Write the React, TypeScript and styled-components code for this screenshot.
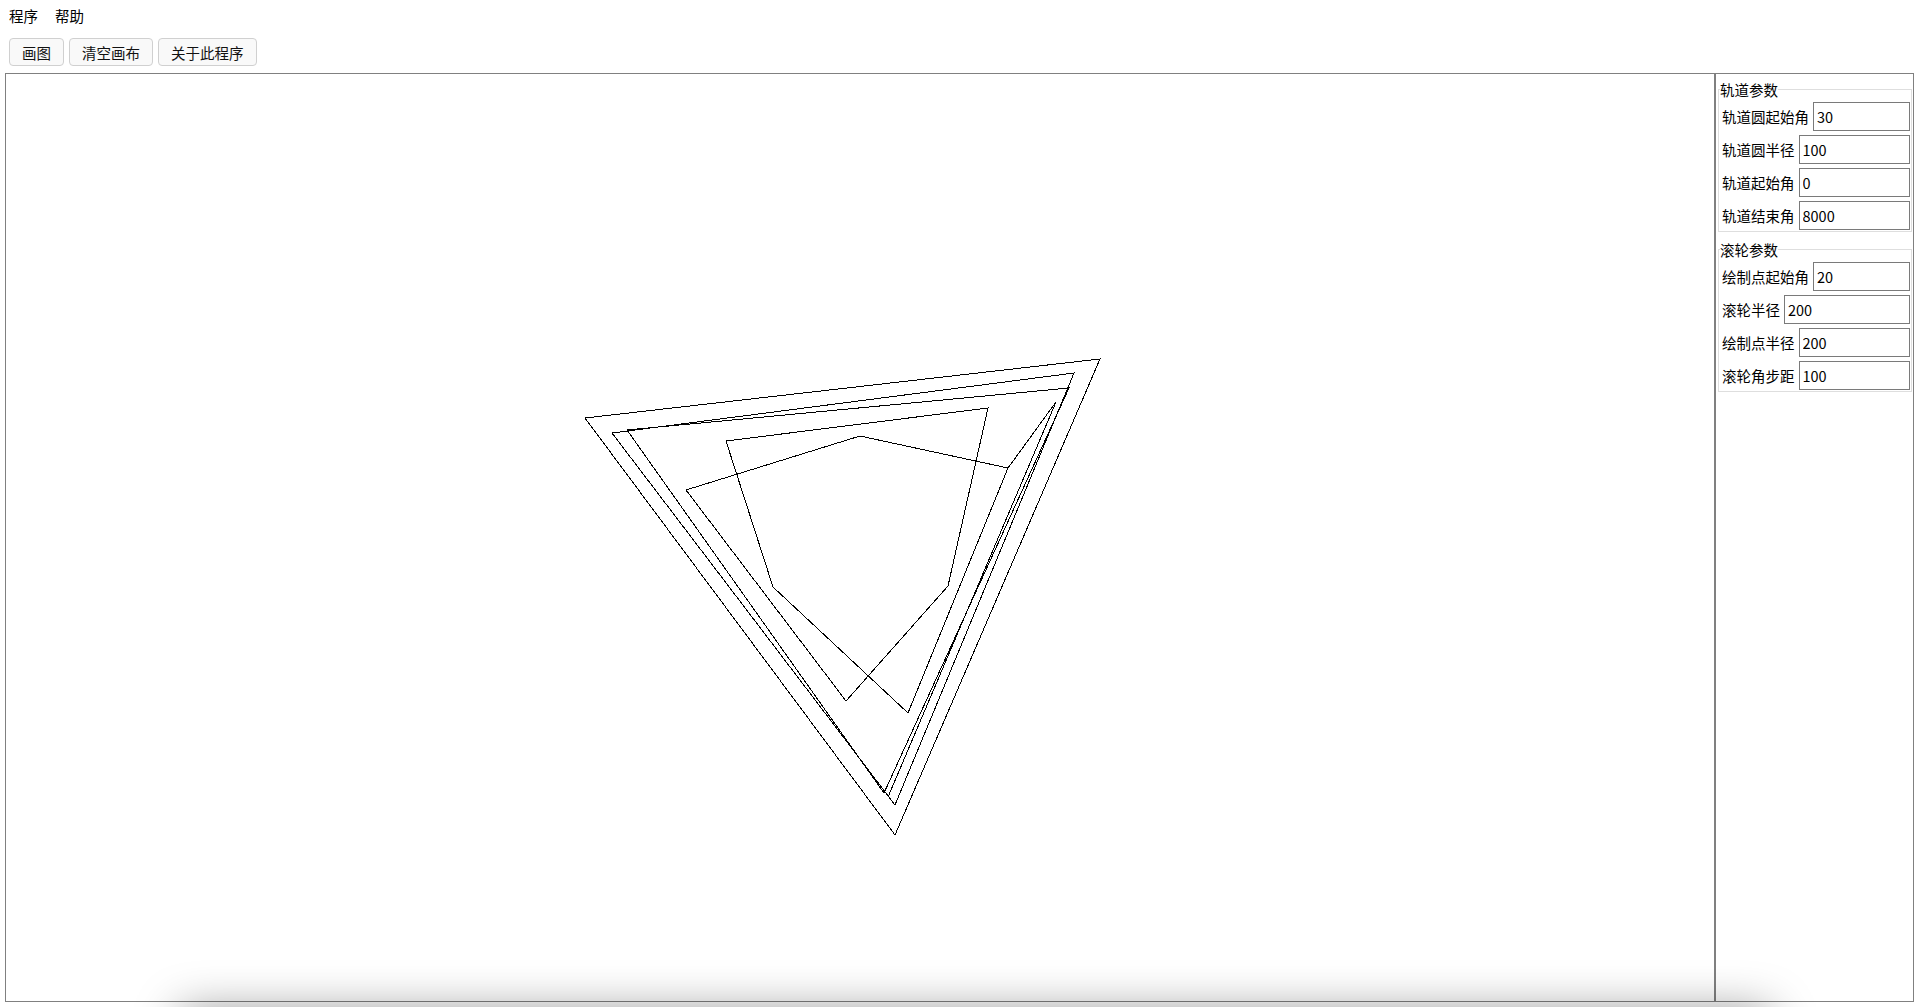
import React, { useState } from "react";
import styled, { createGlobalStyle } from "styled-components";

const GlobalStyle = createGlobalStyle`
  html, body {
    margin: 0;
    padding: 0;
    background: #ffffff;
    overflow: hidden;
  }
  body {
    font-family: "Noto Sans CJK SC", "Noto Sans", sans-serif;
    font-size: 14.5px;
    color: #000;
  }
`;

interface IField {
  label: string;
  value: string;
}

const trackFields: IField[] = [
  { label: "轨道圆起始角", value: "30" },
  { label: "轨道圆半径", value: "100" },
  { label: "轨道起始角", value: "0" },
  { label: "轨道结束角", value: "8000" },
];

const rollerFields: IField[] = [
  { label: "绘制点起始角", value: "20" },
  { label: "滚轮半径", value: "200" },
  { label: "绘制点半径", value: "200" },
  { label: "滚轮角步距", value: "100" },
];

// page coords of the drawn curve, canvas origin is (6, 74)
const curves: number[][][] = [
  [[585, 418], [1100, 359], [895, 835], [585, 418]],
  [[612, 433], [1074, 373], [895, 805], [612, 433]],
  [[627, 430], [1069, 388], [884, 793], [627, 430]],
  [
    [888, 797], [1056, 402], [1008, 468], [860, 436], [686, 490],
    [846, 701], [948, 586], [988, 408], [726, 441], [773, 587],
    [908, 713], [1008, 468],
  ],
];

const toPoints = (pts: number[][]) =>
  pts.map(([x, y]) => `${x - 6},${y - 74}`).join(" ");

const ParamGroup = ({ title, fields }: { title: string; fields: IField[] }) => {
  const [values, setValues] = useState(fields.map((f) => f.value));
  return (
    <Group>
      <Legend>{title}</Legend>
      {fields.map((f, i) => (
        <Row key={f.label} last={i === fields.length - 1}>
          <Label>{f.label}</Label>
          <Input
            value={values[i]}
            onChange={(e: React.FormEvent<HTMLInputElement>) => {
              const v = e.currentTarget.value;
              setValues((prev) => prev.map((p, j) => (j === i ? v : p)));
            }}
          />
        </Row>
      ))}
    </Group>
  );
};

const App = () => {
  return (
    <>
      <GlobalStyle />
      <Page>
        <MenuBar>
          <MenuItem>程序</MenuItem>
          <MenuItem>帮助</MenuItem>
        </MenuBar>
        <Toolbar>
          <ToolButton>画图</ToolButton>
          <ToolButton>清空画布</ToolButton>
          <ToolButton>关于此程序</ToolButton>
        </Toolbar>
        <Workspace>
          <Canvas>
            <svg width="100%" height="100%" shapeRendering="crispEdges">
              {curves.map((c, i) => (
                <polyline
                  key={i}
                  points={toPoints(c)}
                  fill="none"
                  stroke="#000"
                  strokeWidth={1}
                />
              ))}
            </svg>
          </Canvas>
          <Panel>
            <ParamGroup title="轨道参数" fields={trackFields} />
            <ParamGroup title="滚轮参数" fields={rollerFields} />
          </Panel>
        </Workspace>
      </Page>
      <OffscreenShadow />
    </>
  );
};

export default App;

const Page = styled.div`
  width: 100vw;
  height: 100vh;
  display: flex;
  flex-direction: column;
`;

const MenuBar = styled.div`
  display: flex;
  align-items: center;
  gap: 17px;
  height: 32px;
  padding-left: 9px;
`;

const MenuItem = styled.span`
  line-height: 20px;
  cursor: default;
`;

const Toolbar = styled.div`
  display: flex;
  gap: 5px;
  padding: 6px 0 7px 9px;
`;

const ToolButton = styled.button`
  height: 28px;
  padding: 0 12px;
  border: 1px solid #d0d0d0;
  border-radius: 4px;
  background: #f9f9f9;
  font-family: inherit;
  font-size: 14.5px;
  color: #111;
  cursor: pointer;
`;

const Workspace = styled.div`
  display: flex;
  height: 929px;
  margin: 0 6px 0 5px;
  border: 1px solid #808080;
  box-sizing: border-box;
`;

const Canvas = styled.div`
  flex: 1;
  border-right: 2px solid #808080;
  background: #fff;
`;

const Panel = styled.div`
  width: 197px;
  display: flex;
  flex-direction: column;
  gap: 9px;
  padding-top: 7px;
`;

const Group = styled.fieldset`
  margin: 0 1px 0 2px;
  padding: 4px 1px 1px 3px;
  border: 1px solid #dedede;
  min-width: 0;
`;

const Legend = styled.legend`
  padding: 0;
  margin-left: -2px;
  line-height: 17px;
  font-size: 14.5px;
`;

const Row = styled.div<{ last?: boolean }>`
  display: flex;
  align-items: center;
  gap: 4px;
  margin-bottom: ${(p) => (p.last ? "0" : "4px")};
`;

const Label = styled.span`
  white-space: nowrap;
  line-height: 29px;
`;

const Input = styled.input`
  flex: 1;
  min-width: 0;
  height: 29px;
  box-sizing: border-box;
  border: 1px solid #7a7a7a;
  padding: 0 3px;
  font-family: inherit;
  font-size: 14.5px;
  color: #000;
  outline: none;
`;

const OffscreenShadow = styled.div`
  position: fixed;
  left: 180px;
  top: 1010px;
  width: 1590px;
  height: 80px;
  background: #fff;
  box-shadow: 0 0 46px rgba(0, 0, 0, 0.4);
`;
